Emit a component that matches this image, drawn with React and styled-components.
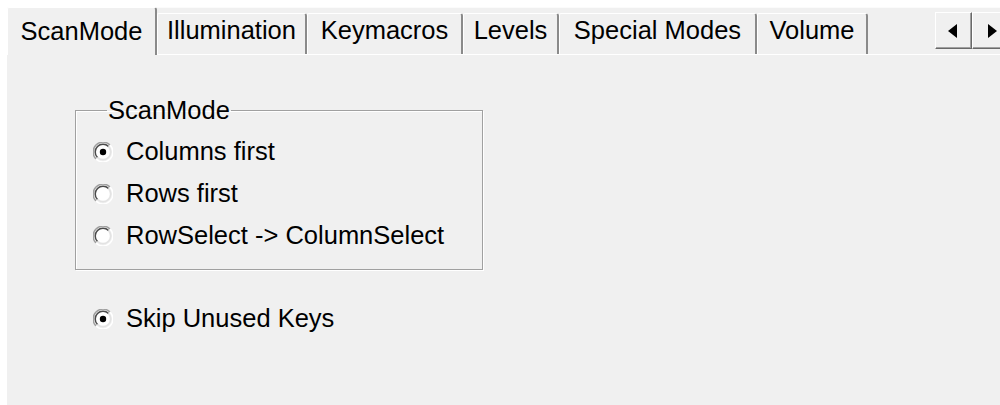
import React, { useState } from 'react';
import styled, { createGlobalStyle } from 'styled-components';

const GlobalStyle = createGlobalStyle`
  html, body {
    margin: 0;
    padding: 0;
    background: #ffffff;
    overflow: hidden;
  }
  body {
    font-family: "Liberation Sans", Arial, sans-serif;
  }
`;

const tabs = [
  { label: 'ScanMode', width: 150 },
  { label: 'Illumination', width: 150 },
  { label: 'Keymacros', width: 156 },
  { label: 'Levels', width: 96 },
  { label: 'Special Modes', width: 198 },
  { label: 'Volume', width: 111 },
];

const scanModes = ['Columns first', 'Rows first', 'RowSelect -> ColumnSelect'];

const RadioMark = ({ checked }) => (
  <svg width="20" height="20" viewBox="0 0 20 20">
    <path d="M3 17 A9.5 9.5 0 0 1 17 3" fill="none" stroke="#a0a0a0" strokeWidth="1.5" />
    <path d="M4.5 15.5 A7.6 7.6 0 0 1 15.5 4.5" fill="none" stroke="#4a4a4a" strokeWidth="1.5" />
    <path d="M17 3 A9.5 9.5 0 0 1 3 17" fill="none" stroke="#ffffff" strokeWidth="1.5" />
    <path d="M15.5 4.5 A7.6 7.6 0 0 1 4.5 15.5" fill="none" stroke="#e3e3e3" strokeWidth="1.5" />
    <circle cx="10" cy="10" r="6.6" fill="#ffffff" />
    {checked && <circle cx="10" cy="10" r="3.2" fill="#000" />}
  </svg>
);

const App = () => {
  const [active, setActive] = useState(0);
  const [mode, setMode] = useState(0);
  const [skipUnused, setSkipUnused] = useState(true);

  return (
    <>
      <GlobalStyle />
      <Window>
        <TabStrip>
          {tabs.map((t, i) => (
            <Tab key={t.label} $w={t.width} $active={i === active} onClick={() => setActive(i)}>
              {t.label}
            </Tab>
          ))}
          <Spacer />
          <ScrollButtons>
            <ArrowButton type="button">
              <Arrow $dir="left" />
            </ArrowButton>
            <ArrowButton type="button">
              <Arrow $dir="right" />
            </ArrowButton>
          </ScrollButtons>
        </TabStrip>
        <Panel>
          <GroupBox>
            <Legend>ScanMode</Legend>
            {scanModes.map((m, i) => (
              <RadioRow key={m} onClick={() => setMode(i)}>
                <RadioMark checked={mode === i} />
                <RadioLabel>{m}</RadioLabel>
              </RadioRow>
            ))}
          </GroupBox>
          <SkipRow onClick={() => setSkipUnused(!skipUnused)}>
            <RadioMark checked={skipUnused} />
            <RadioLabel>Skip Unused Keys</RadioLabel>
          </SkipRow>
        </Panel>
      </Window>
    </>
  );
};

const Window = styled.div`
  margin: 7px 0 0 7px;
  width: 1002px;
  height: 398px;
  background: #f0f0f0;
  display: flex;
  flex-direction: column;
  color: #000;
  font-size: 25.5px;
  user-select: none;
`;

const TabStrip = styled.div`
  display: flex;
  align-items: flex-end;
  height: 48px;
  border-top: 1px solid #fbfbfb;
  border-bottom: 1px solid #ffffff;
  box-sizing: border-box;
`;

const Tab = styled.div`
  box-sizing: border-box;
  width: ${({ $w }) => $w}px;
  height: ${({ $active }) => ($active ? '48px' : '41px')};
  margin-bottom: ${({ $active }) => ($active ? '-1px' : '0')};
  display: flex;
  align-items: center;
  justify-content: center;
  padding-bottom: ${({ $active }) => ($active ? '1px' : '8px')};
  background: #f0f0f0;
  border-top: 1px solid #ffffff;
  border-left: 1px solid #ffffff;
  border-right: 2px solid #8a8a8a;
  border-top-right-radius: 3px;
  border-top-left-radius: 2px;
  white-space: nowrap;
  cursor: default;
  position: relative;
  z-index: ${({ $active }) => ($active ? 1 : 0)};
`;

const Spacer = styled.div`
  flex: 1;
`;

const ScrollButtons = styled.div`
  align-self: flex-start;
  margin-top: 4px;
  display: flex;
`;

const ArrowButton = styled.button`
  box-sizing: border-box;
  width: 37px;
  height: 37px;
  padding: 0;
  background: #f0f0f0;
  border-top: 1px solid #ffffff;
  border-left: 1px solid #ffffff;
  border-right: 1px solid #696969;
  border-bottom: 1px solid #696969;
  box-shadow: inset -1px -1px 0 #a0a0a0;
  display: flex;
  align-items: center;
  justify-content: center;
`;

const Arrow = styled.span`
  width: 0;
  height: 0;
  border-top: 7px solid transparent;
  border-bottom: 7px solid transparent;
  ${({ $dir }) =>
    $dir === 'left'
      ? 'border-right: 9px solid #000; margin-right: 3px;'
      : 'border-left: 9px solid #000; margin-left: 3px;'}
`;

const Panel = styled.div`
  flex: 1;
  padding: 41px 0 0 68px;
  display: flex;
  flex-direction: column;
  align-items: flex-start;
`;

const GroupBox = styled.fieldset`
  box-sizing: border-box;
  width: 408px;
  margin: 0;
  padding: 6px 0 12px 17px;
  border: 1px solid #a0a0a0;
  box-shadow: inset 1px 1px 0 #ffffff, 1px 1px 0 #ffffff;
  border-radius: 0;
  min-width: 0;
`;

const Legend = styled.legend`
  padding: 0 1px;
  margin-left: 14px;
  line-height: 1.12;
`;

const RadioRow = styled.label`
  display: flex;
  align-items: center;
  gap: 13px;
  height: 42px;
  cursor: default;
`;

const SkipRow = styled(RadioRow)`
  margin: 28px 0 0 18px;
`;

const RadioLabel = styled.span`
  white-space: nowrap;
`;

export default App;
